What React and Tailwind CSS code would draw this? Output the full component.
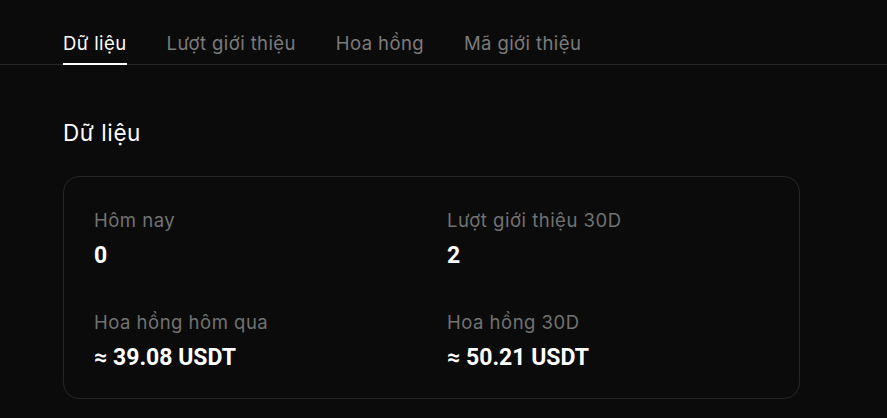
import React from 'react'

const tabs = ['Dữ liệu', 'Lượt giới thiệu', 'Hoa hồng', 'Mã giới thiệu']

const stats = [
  { label: 'Hôm nay', value: '0' },
  { label: 'Lượt giới thiệu 30D', value: '2' },
  { label: 'Hoa hồng hôm qua', value: '≈ 39.08 USDT' },
  { label: 'Hoa hồng 30D', value: '≈ 50.21 USDT' },
]

export default function App() {
  return (
    <div className="w-[887px] h-[418px] overflow-hidden bg-[#0b0b0b] text-white" style={{ fontFamily: 'Inter, "Open Sans", sans-serif' }}>
      <div className="flex gap-10 pl-[63px] pt-[30px] border-b border-[#262626]">
        {tabs.map((tab, i) => (
          <div
            key={tab}
            className={`pb-[7px] text-[18.5px] leading-[26px] tracking-[0.4px] border-b-[2px] -mb-px ${i === 0 ? 'text-white border-white' : 'text-[#7b7b7b] border-transparent'}`}
          >
            {tab}
          </div>
        ))}
      </div>

      <div className="pl-[63px] pt-[53px]">
        <h2 className="text-[22.5px] leading-[30px] tracking-[0.6px] font-normal">Dữ liệu</h2>

        <div className="mt-[28px] w-[737px] h-[223px] rounded-[16px] border border-[#262626] pl-[30px] pt-[31px]">
          <div className="grid grid-cols-[353px_1fr] gap-y-[39px]">
            {stats.map((s) => (
              <div key={s.label} className="flex flex-col gap-[9px]">
                <span className="text-[18.5px] leading-[24px] tracking-[0.5px] text-[#727272]">{s.label}</span>
                <span className="text-[23px] leading-[30px] font-bold text-white" style={{ fontFamily: 'Roboto, sans-serif' }}>
                  {s.value}
                </span>
              </div>
            ))}
          </div>
        </div>
      </div>
    </div>
  )
}
